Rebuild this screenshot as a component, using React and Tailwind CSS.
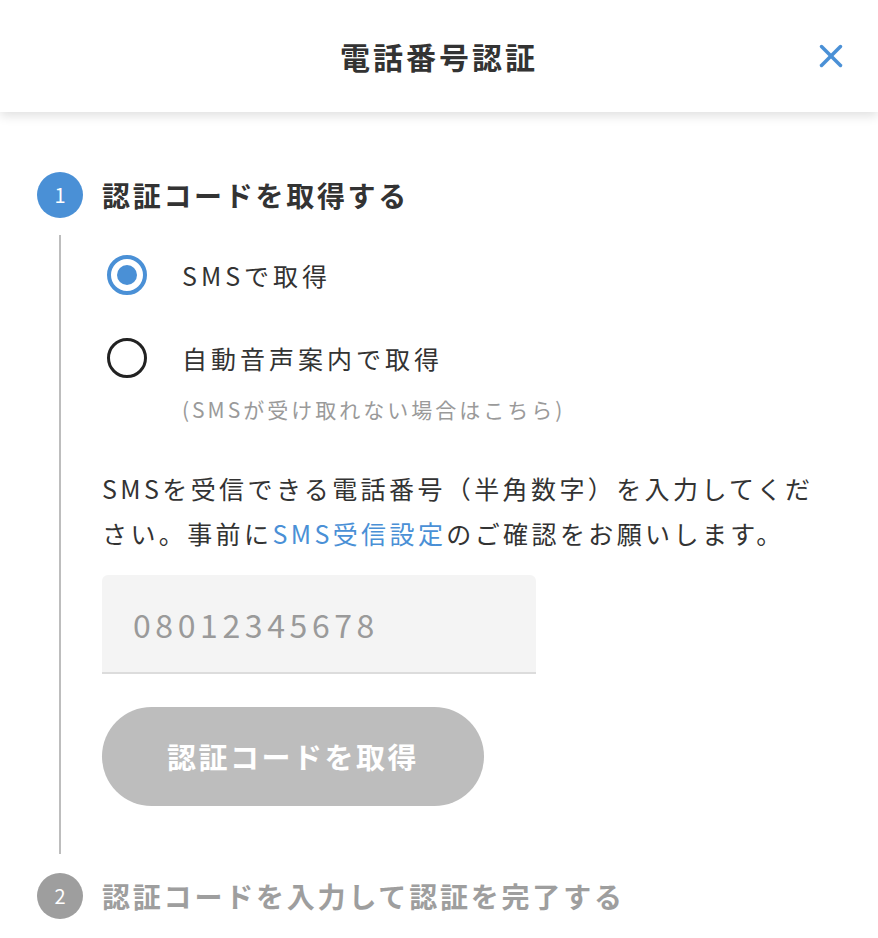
import { X } from 'lucide-react';

const FONT = { fontFamily: '"Noto Sans CJK JP", "Noto Sans", sans-serif' };

// ── Step badge ──
function StepBadge({ n, active }) {
  return (
    <span
      className={`flex h-[46px] w-[46px] shrink-0 items-center justify-center rounded-full text-[20px] text-white
                  ${active ? 'bg-[#4a90d6]' : 'bg-[#9e9e9e]'}`}
    >
      {n}
    </span>
  );
}

// ── Radio option ──
function RadioOption({ checked, label, note }) {
  return (
    <div className="flex items-start">
      <span
        className={`ml-[5px] flex h-[40px] w-[40px] shrink-0 items-center justify-center rounded-full
                    ${checked ? 'border-[4px] border-[#4a90d6]' : 'border-[3px] border-[#222]'}`}
      >
        {checked && <span className="h-[20px] w-[20px] rounded-full bg-[#4a90d6]" />}
      </span>
      <div className="ml-[35px]">
        <p className="text-[25px] leading-[40px] tracking-[4px] text-[#333]">{label}</p>
        {note && (
          <p className="mt-[17px] text-[21px] leading-[28px] tracking-[3px] text-[#9a9a9a]">{note}</p>
        )}
      </div>
    </div>
  );
}

export default function App() {
  return (
    <div className="min-h-[938px] w-full bg-white" style={FONT}>
      {/* Header */}
      <header className="relative z-10 flex h-[112px] items-center justify-center bg-white shadow-[0_4px_10px_rgba(0,0,0,0.12)]">
        <h1 className="text-[30px] font-bold tracking-[3px] text-[#333]">電話番号認証</h1>
        <button type="button" className="absolute right-[28px] top-1/2 -translate-y-1/2 text-[#4a90d6]">
          <X size={38} strokeWidth={2.2} />
        </button>
      </header>

      <main className="pl-[37px] pt-[60px]">
        {/* Step 1 */}
        <div className="flex items-center">
          <StepBadge n={1} active />
          <h2 className="ml-[19px] text-[28px] font-bold tracking-[2.7px] text-[#333]">認証コードを取得する</h2>
        </div>

        <div className="mt-[17px] flex">
          <div className="flex w-[46px] shrink-0 justify-center">
            <div className="w-[2px] bg-[#bdbdbd]" />
          </div>
          <div className="ml-[19px] w-[728px] pb-[48px] pt-[20px]">
            <RadioOption checked label="SMSで取得" />
            <div className="mt-[43px]">
              <RadioOption label="自動音声案内で取得" note="(SMSが受け取れない場合はこちら)" />
            </div>

            <p className="mt-[43px] text-[25px] leading-[45px] tracking-[3.4px] text-[#333]">
              SMSを受信できる電話番号（半角数字）を入力してください。事前に
              <a className="text-[#4a90d6]">SMS受信設定</a>
              のご確認をお願いします。
            </p>

            <input
              type="tel"
              placeholder="08012345678"
              className="mt-[19px] block h-[99px] w-[434px] rounded-t-[6px] border-b-2 border-[#dcdcdc] bg-[#f4f4f4] px-[31px]
                         text-[32px] tracking-[4.6px] outline-none placeholder:text-[#9a9a9a]"
            />

            <button
              type="button"
              disabled
              className="mt-[33px] flex h-[99px] w-[382px] items-center justify-center rounded-full bg-[#bdbdbd]
                         text-[29px] font-bold tracking-[2.5px] text-white"
            >
              認証コードを取得
            </button>
          </div>
        </div>

        {/* Step 2 */}
        <div className="mt-[19px] flex items-center">
          <StepBadge n={2} />
          <h2 className="ml-[19px] text-[28px] font-bold tracking-[2.8px] text-[#9e9e9e]">
            認証コードを入力して認証を完了する
          </h2>
        </div>
      </main>
    </div>
  );
}
